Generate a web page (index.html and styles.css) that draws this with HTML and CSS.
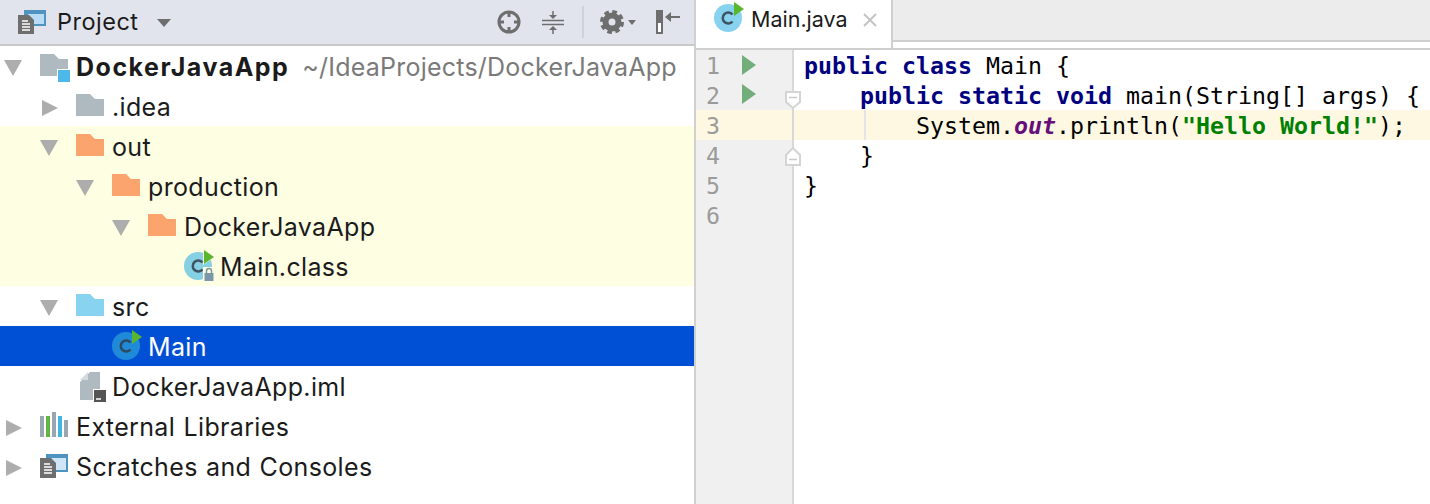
FILE: index.html
```html
<!DOCTYPE html>
<html lang="en">
<head>
<meta charset="utf-8">
<title>Main.java</title>
<link rel="stylesheet" href="styles.css">
</head>
<body>
<svg class="defs" width="0" height="0" aria-hidden="true">
  <defs>
    <symbol id="arrow-down" viewBox="0 0 36 40"><path d="M0 14H18L9 30Z" fill="#adadad"/></symbol>
    <symbol id="arrow-right" viewBox="0 0 36 40"><path d="M2 14L18 22L2 30Z" fill="#adadad"/></symbol>
    <symbol id="folder" viewBox="0 0 36 40"><path d="M0 8H14L19 13H28V30H0Z"/></symbol>
    <symbol id="sheet" viewBox="0 0 36 40">
      <path d="M6 8H28V26H6Z" fill="#4f93c0"/>
      <rect x="10" y="12" width="16" height="12" fill="#cfe6f8"/>
      <path d="M0 12H11L16 17V32H0Z" fill="#6e6e6e"/>
      <path d="M4 18H10M4 21H12M4 24H12M4 27H12" stroke="#fff" stroke-width="1.500"/>
    </symbol>
  </defs>
</svg>
<main class="ide">
  <section class="project">
    <header class="toolbar">
      <svg class="project-icon" width="36" height="40" viewBox="0 0 36 40"><path d="M6 8H28V24H6Z" fill="#4f93c0"/><rect x="10" y="12" width="16" height="10" fill="#b8dcf5"/><path d="M0 13H11L16 18V32H0Z" fill="#6e6e6e"/><path d="M4 19H10M4 22H12M4 25H12M4 28H12" stroke="#fff" stroke-width="1.500"/></svg>
      <span class="toolbar-title">Project</span>
      <span class="toolbar-caret"></span>
      <span class="toolbar-space"></span>
      <svg class="tool tool-locate" width="24" height="24" viewBox="0 0 24 24"><circle cx="12" cy="12" r="10" fill="none" stroke="#6e6e6e" stroke-width="3"/><path d="M12 2V7M12 17V22M2 12H7M17 12H22" stroke="#6e6e6e" stroke-width="3"/></svg>
      <svg class="tool tool-collapse" width="24" height="24" viewBox="0 0 24 24"><path d="M1 10.500H23M1 14.500H23" stroke="#6e6e6e" stroke-width="1.500"/><path d="M12 1V5" stroke="#6e6e6e" stroke-width="1.500"/><path d="M8 5H16L12 9ZM8 20H16L12 16Z" fill="#6e6e6e"/><path d="M12 20V24" stroke="#6e6e6e" stroke-width="1.500"/></svg>
      <span class="tool-sep"></span>
      <svg class="tool tool-gear" width="24" height="24" viewBox="0 0 24 24"><circle cx="12" cy="12" r="6.500" fill="none" stroke="#6e6e6e" stroke-width="6"/><circle cx="12" cy="12" r="10" fill="none" stroke="#6e6e6e" stroke-width="4" stroke-dasharray="4.500 3.354"/></svg>
      <span class="gear-caret"></span>
      <svg class="tool tool-hide" width="24" height="24" viewBox="0 0 24 24"><rect x="1" y="1" width="5" height="22" fill="#fff" stroke="#6e6e6e" stroke-width="2"/><rect x="0" y="0" width="7" height="13" fill="#6e6e6e"/><path d="M11 7H24" stroke="#6e6e6e" stroke-width="2"/><path d="M15 2V12L9 7Z" fill="#6e6e6e"/></svg>
    </header>
    <div class="tree">
      <div class="row d0">
        <svg class="slot"><use href="#arrow-down"/></svg>
        <svg class="slot" viewBox="0 0 36 40"><use href="#folder" fill="#afb9c0" width="36" height="40"/><rect x="17" y="23" width="14" height="14" fill="#fff"/><rect x="18" y="24" width="12" height="12" fill="#4cb9ea"/></svg>
        <span class="label strong">DockerJavaApp</span><span class="path">~/IdeaProjects/DockerJavaApp</span>
      </div>
      <div class="row d1">
        <svg class="slot"><use href="#arrow-right"/></svg>
        <svg class="slot"><use href="#folder" fill="#afb9c0"/></svg>
        <span class="label">.idea</span>
      </div>
      <div class="row d1 excluded">
        <svg class="slot"><use href="#arrow-down"/></svg>
        <svg class="slot"><use href="#folder" fill="#fba46d"/></svg>
        <span class="label">out</span>
      </div>
      <div class="row d2 excluded">
        <svg class="slot"><use href="#arrow-down"/></svg>
        <svg class="slot"><use href="#folder" fill="#fba46d"/></svg>
        <span class="label">production</span>
      </div>
      <div class="row d3 excluded">
        <svg class="slot"><use href="#arrow-down"/></svg>
        <svg class="slot"><use href="#folder" fill="#fba46d"/></svg>
        <span class="label">DockerJavaApp</span>
      </div>
      <div class="row d4 excluded">
        <span class="slot"></span>
        <svg class="slot" viewBox="0 0 36 40"><circle cx="14" cy="20" r="14" fill="#85d0e2"/><path d="M18.500 16.500A5.500 5.500 0 1 0 18.500 23.500" fill="none" stroke="#3f5563" stroke-width="2.500"/><path d="M19 3L31 11L19 19Z" fill="#fefee3"/><path d="M20 4L30 11L20 18Z" fill="#5ab52f"/><rect x="19" y="21" width="12" height="16" fill="#fefee3"/><path d="M22.500 27V25A2.500 2.500 0 0 1 27.500 25V27" fill="none" stroke="#7b97a8" stroke-width="1.500"/><rect x="20.500" y="27" width="9" height="8" fill="#7b97a8"/></svg>
        <span class="label">Main.class</span>
      </div>
      <div class="row d1">
        <svg class="slot"><use href="#arrow-down"/></svg>
        <svg class="slot"><use href="#folder" fill="#87d3f0"/></svg>
        <span class="label">src</span>
      </div>
      <div class="row d2 selected">
        <span class="slot"></span>
        <svg class="slot" viewBox="0 0 36 40"><circle cx="14" cy="20" r="14" fill="#1f8ad8"/><path d="M18.500 16.500A5.500 5.500 0 1 0 18.500 23.500" fill="none" stroke="#2f4a5f" stroke-width="2.500"/><path d="M20 4L30 11L20 18Z" fill="#5ab52f"/></svg>
        <span class="label">Main</span>
      </div>
      <div class="row d1">
        <span class="slot"></span>
        <svg class="slot" viewBox="0 0 36 40"><path d="M14 6H24V34H4V16Z" fill="#afb9c0"/><path d="M4 14L12 6V14Z" fill="#d3d9dd"/><rect x="17" y="23" width="14" height="14" fill="#fff"/><rect x="18" y="24" width="12" height="12" fill="#555"/><path d="M20 33H25" stroke="#fff" stroke-width="1.500"/></svg>
        <span class="label">DockerJavaApp.iml</span>
      </div>
      <div class="row d0">
        <svg class="slot"><use href="#arrow-right"/></svg>
        <svg class="slot" viewBox="0 0 36 40"><rect x="0" y="10" width="4" height="21" fill="#9aa7b0"/><rect x="6" y="10" width="4" height="21" fill="#62b543"/><rect x="12" y="6" width="4" height="25" fill="#9aa7b0"/><rect x="18" y="10" width="4" height="21" fill="#40b6e0"/><rect x="24" y="14" width="4" height="17" fill="#9aa7b0"/></svg>
        <span class="label">External Libraries</span>
      </div>
      <div class="row d0">
        <svg class="slot"><use href="#arrow-right"/></svg>
        <svg class="slot"><use href="#sheet"/></svg>
        <span class="label">Scratches and Consoles</span>
      </div>
    </div>
  </section>
  <section class="editor">
    <nav class="tabs">
      <div class="tab">
        <svg class="tab-icon" width="32" height="40" viewBox="0 0 32 40"><circle cx="14" cy="18" r="14" fill="#87d3ef"/><path d="M18.500 14.500A5.500 5.500 0 1 0 18.500 21.500" fill="none" stroke="#3f5563" stroke-width="2.500"/><path d="M20 2L30 9L20 16Z" fill="#5ab52f"/></svg>
        <span class="tab-name">Main.java</span>
        <svg class="tab-close" width="14" height="14" viewBox="0 0 14 14"><path d="M1 1L13 13M13 1L1 13" stroke="#c4c4c4" stroke-width="2"/></svg>
      </div>
      <div class="tabs-rest"></div>
    </nav>
    <div class="code">
      <div class="line">
        <div class="gutter"><span class="num">1</span><svg class="run" width="14" height="20" viewBox="0 0 14 20"><path d="M0 0L14 10L0 20Z" fill="#73ad7a"/></svg></div>
        <pre class="src"><b class="kw">public class</b> Main {</pre>
      </div>
      <div class="line">
        <div class="gutter"><span class="num">2</span><svg class="run run-up" width="14" height="20" viewBox="0 0 14 20"><path d="M0 0L14 10L0 20Z" fill="#73ad7a"/></svg>
          <svg class="fold fold-open" width="16" height="18" viewBox="0 0 16 18"><path d="M1 1H15V11L8 17L1 11Z" fill="#fff" stroke="#d4d4d4" stroke-width="2"/><path d="M4 6.500H12" stroke="#c8c8c8" stroke-width="1.500"/></svg>
        </div>
        <pre class="src">    <b class="kw">public static void</b> main(String[] args) {</pre>
      </div>
      <div class="line current">
        <div class="gutter"><span class="num">3</span></div>
        <span class="guide"></span>
        <pre class="src">        System.<b class="field">out</b>.println(<b class="str">"Hello World!"</b>);</pre>
      </div>
      <div class="line">
        <div class="gutter"><span class="num">4</span>
          <svg class="fold fold-close" width="16" height="19" viewBox="0 0 16 19"><path d="M1 18H15V8L8 1L1 8Z" fill="#fff" stroke="#d4d4d4" stroke-width="2"/><path d="M4 12.500H12" stroke="#c8c8c8" stroke-width="1.500"/></svg>
        </div>
        <pre class="src">    }</pre>
      </div>
      <div class="line">
        <div class="gutter"><span class="num">5</span></div>
        <pre class="src">}</pre>
      </div>
      <div class="line">
        <div class="gutter"><span class="num">6</span></div>
        <pre class="src"></pre>
      </div>
      <div class="line line-fill">
        <div class="gutter"></div>
      </div>
    </div>
  </section>
</main>
</body>
</html>
```
FILE: styles.css
```css
* { box-sizing: border-box; }
html, body { margin: 0; height: 100%; background: #fff; overflow: hidden; }
.defs { position: absolute; }
.ide { display: flex; width: 1430px; height: 504px; font-family: Inter, "Liberation Sans", sans-serif; color: #1b1b1b; }

/* project panel */
.project { width: 696px; flex: none; border-right: 2px solid #d0d0d0; display: flex; flex-direction: column; }
.toolbar { height: 46px; flex: none; display: flex; align-items: center; background: #e1e4ec; border-bottom: 2px solid #c9c9c9; padding-left: 18px; }
.project-icon { flex: none; width: 36px; height: 40px; margin-right: 3px; }
.toolbar-title { font-size: 23.500px; letter-spacing: 0.500px; padding-bottom: 2px; }
.toolbar-caret { width: 0; height: 0; margin-left: 18px; margin-top: 1px; border-left: 7px solid transparent; border-right: 7px solid transparent; border-top: 8px solid #6e6e6e; }
.toolbar-space { flex: 1; }
.tool { flex: none; }
.tool-locate { margin-right: 20px; }
.tool-collapse { margin-right: 17px; }
.tool-sep { width: 2px; height: 32px; background: #cfd2d9; margin-right: 16px; }
.tool-gear { margin-right: 4px; }
.gear-caret { width: 0; height: 0; margin-right: 20px; border-left: 4.500px solid transparent; border-right: 4.500px solid transparent; border-top: 5px solid #6e6e6e; }
.tool-hide { margin-right: 14px; }

.tree { display: flex; flex-direction: column; }
.row { height: 40px; display: flex; align-items: center; font-size: 25px; letter-spacing: 0.350px; word-spacing: 1px; white-space: nowrap; }
.d0 { padding-left: 4px; }
.d1 { padding-left: 40px; }
.d2 { padding-left: 76px; }
.d3 { padding-left: 112px; }
.d4 { padding-left: 148px; }
.slot { display: block; flex: none; width: 36px; height: 40px; overflow: visible; }
.label { padding-top: 2px; }
.strong { font-weight: 700; letter-spacing: 1.500px; }
.path { padding-top: 2px; margin-left: 13px; color: #7a7a7a; letter-spacing: 0.220px; }
.excluded { background: #fefee3; }
.selected { background: #0050d5; color: #fff; }

/* editor */
.editor { flex: 1; min-width: 0; display: flex; flex-direction: column; }
.tabs { height: 50px; flex: none; display: flex; align-items: flex-start; border-bottom: 2px solid #cfcfcf; }
.tab { width: 197px; height: 48px; flex: none; display: flex; align-items: center; background: #fff; border-right: 2px solid #cfcfcf; padding-left: 18px; }
.tab-icon { flex: none; margin-top: -8px; margin-right: 5px; }
.tab-name { font-size: 21.500px; margin-top: -10px; }
.tab-close { margin-left: 15px; margin-top: -8px; flex: none; }
.tabs-rest { flex: 1; height: 42px; background: #ececec; border-bottom: 2px solid #cfcfcf; }

.code { flex: 1; display: flex; flex-direction: column; font-family: "DejaVu Sans Mono", monospace; font-size: 23.250px; }
.line { height: 30px; flex: none; display: flex; position: relative; }
.line-fill { flex: 1; height: auto; }
.gutter { width: 98px; flex: none; background: #f0f0f0; border-right: 2px solid #d8d8d8; position: relative; display: flex; align-items: flex-start; padding-left: 10px; color: #9b9b9b; }
.num { width: 36px; flex: none; line-height: 32px; }
.run { flex: none; margin-top: 5px; }
.run-up { margin-top: 4px; }
.fold { position: absolute; left: 89px; }
.fold-open { top: 11px; }
.fold-close { top: 7px; }
.src { margin: 0; padding-left: 10px; font: inherit; line-height: 32px; color: #000; }
.kw { color: #000080; }
.field { color: #660e7a; font-style: italic; }
.str { color: #008000; }
.current, .current .gutter { background: #fef8e3; }
.guide { position: absolute; left: 168px; top: 0; bottom: 0; width: 2px; background: #e4e4e4; }
```
